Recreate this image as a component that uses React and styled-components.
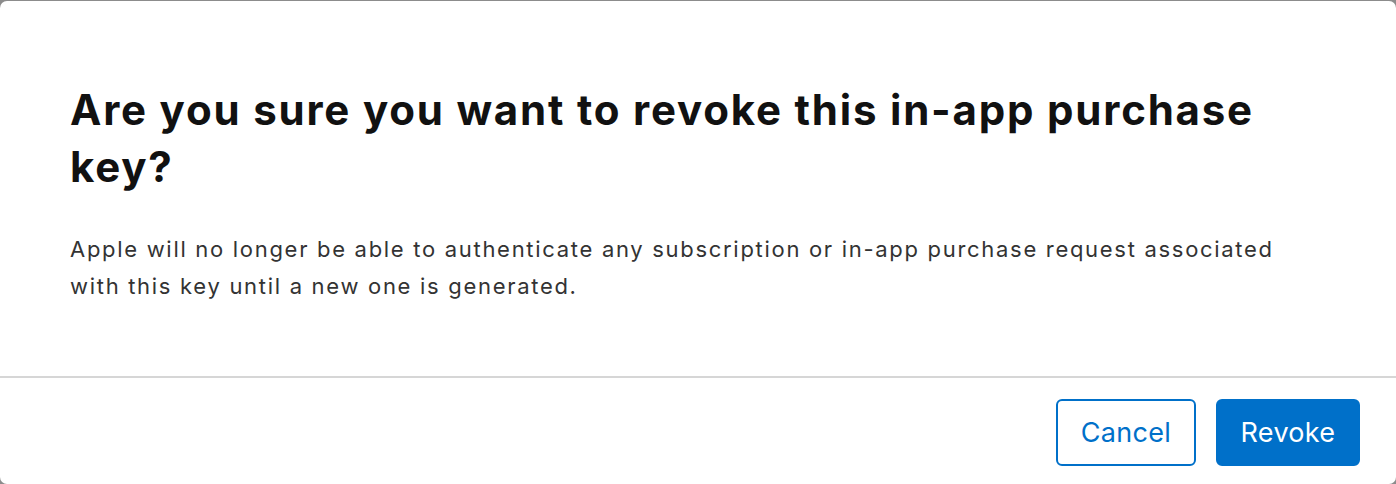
import React from "react";
import styled, { createGlobalStyle } from "styled-components";

const GlobalStyle = createGlobalStyle`
  html, body {
    margin: 0;
    padding: 0;
    background: #8c8c8c;
  }
  body {
    font-family: "Inter", "Liberation Sans", sans-serif;
    -webkit-font-smoothing: antialiased;
  }
`;

const Backdrop = styled.div`
  width: 1396px;
  height: 484px;
  padding-top: 1px;
  box-sizing: border-box;
  background: #8c8c8c;
`;

const Dialog = styled.div`
  height: 483px;
  background: #ffffff;
  border-radius: 7px;
  display: flex;
  flex-direction: column;
  overflow: hidden;
`;

const Body = styled.div`
  height: 375px;
  box-sizing: border-box;
  padding: 80px 70px 0 70px;
`;

const Title = styled.h2`
  margin: 0;
  max-width: 1230px;
  font-size: 42px;
  line-height: 57px;
  font-weight: 700;
  color: #111111;
  letter-spacing: 1.8px;
`;

const Message = styled.p`
  margin: 36px 0 0 0;
  max-width: 1230px;
  font-size: 22px;
  line-height: 37px;
  font-weight: 400;
  color: #333333;
  letter-spacing: 1.7px;
`;

const Footer = styled.div`
  border-top: 2px solid #d6d6d6;
  flex: 1;
  display: flex;
  justify-content: flex-end;
  align-items: flex-start;
  gap: 20px;
  padding: 21px 36px 0 0;
`;

const Button = styled.button`
  height: 67px;
  width: ${(p) => (p.primary ? "144px" : "140px")};
  padding: 0;
  border-radius: 6px;
  font-family: inherit;
  font-size: 27px;
  font-weight: 400;
  letter-spacing: 0.3px;
  cursor: pointer;
  border: 2px solid #0070c9;
  background: ${(p) => (p.primary ? "#0070c9" : "#ffffff")};
  color: ${(p) => (p.primary ? "#ffffff" : "#0070c9")};
`;

export default function App() {
  return (
    <>
      <GlobalStyle />
      <Backdrop>
        <Dialog>
          <Body>
            <Title>Are you sure you want to revoke this in-app purchase key?</Title>
            <Message>
              Apple will no longer be able to authenticate any subscription or in-app purchase request
              associated with this key until a new one is generated.
            </Message>
          </Body>
          <Footer>
            <Button>Cancel</Button>
            <Button primary>Revoke</Button>
          </Footer>
        </Dialog>
      </Backdrop>
    </>
  );
}
